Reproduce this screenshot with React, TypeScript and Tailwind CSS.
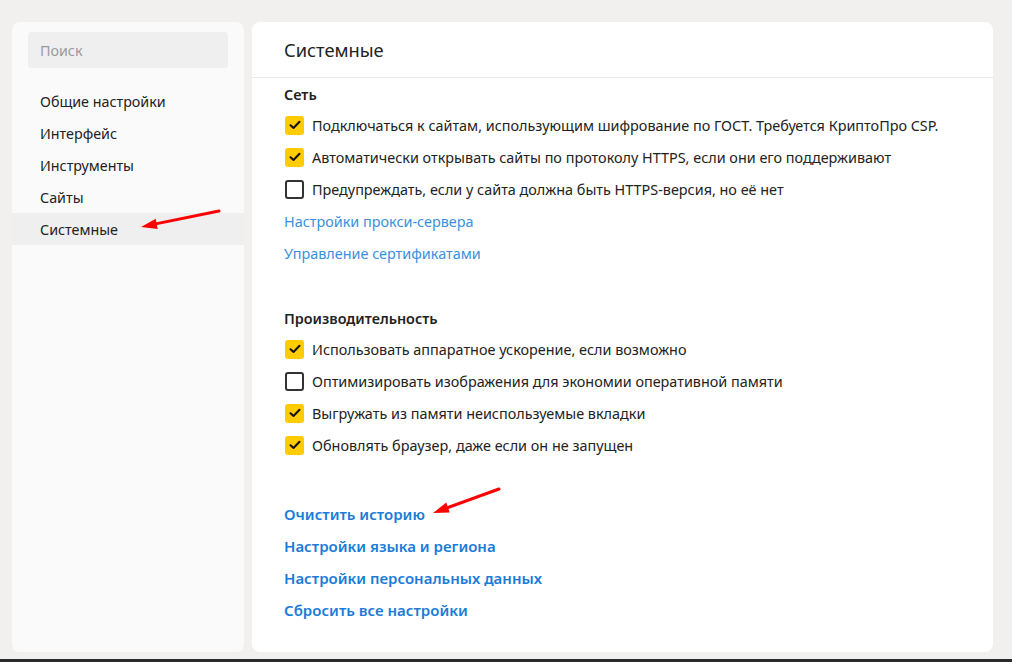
import React from "react";

const NAV_ITEMS = ["Общие настройки", "Интерфейс", "Инструменты", "Сайты", "Системные"];

const NETWORK_OPTIONS = [
  { label: "Подключаться к сайтам, использующим шифрование по ГОСТ. Требуется КриптоПро CSP.", checked: true },
  { label: "Автоматически открывать сайты по протоколу HTTPS, если они его поддерживают", checked: true },
  { label: "Предупреждать, если у сайта должна быть HTTPS-версия, но её нет", checked: false },
];

const PERF_OPTIONS = [
  { label: "Использовать аппаратное ускорение, если возможно", checked: true },
  { label: "Оптимизировать изображения для экономии оперативной памяти", checked: false },
  { label: "Выгружать из памяти неиспользуемые вкладки", checked: true },
  { label: "Обновлять браузер, даже если он не запущен", checked: true },
];

const BOTTOM_LINKS = [
  "Очистить историю",
  "Настройки языка и региона",
  "Настройки персональных данных",
  "Сбросить все настройки",
];

function Checkbox({ checked }: { checked: boolean }) {
  if (checked) {
    return (
      <span className="flex h-[19px] w-[19px] shrink-0 items-center justify-center rounded-[3px] bg-[#ffcc00]">
        <svg width="12" height="10" viewBox="0 0 12 10" fill="none">
          <path d="M1.5 5.2 4.5 8 10.5 1.8" stroke="#111" strokeWidth="2" strokeLinecap="round" strokeLinejoin="round" />
        </svg>
      </span>
    );
  }
  return <span className="h-[19px] w-[19px] shrink-0 rounded-[3px] border-2 border-[#333] bg-white" />;
}

function OptionRow({ label, checked }: { label: string; checked: boolean }) {
  return (
    <div className="flex h-8 items-center gap-2 pl-px">
      <Checkbox checked={checked} />
      <span className="pt-[2px] text-[14.4px] text-[#222]">{label}</span>
    </div>
  );
}

export default function App() {
  return (
    <div
      className="relative flex h-[662px] w-[1012px] flex-col overflow-hidden bg-[#f1f0ee]"
      style={{ fontFamily: '"Noto Sans", "Open Sans", sans-serif' }}
    >
      <div className="flex h-[652px] gap-2 pl-3 pr-[19px] pt-[22px]">
        {/* sidebar */}
        <aside className="flex w-[232px] flex-col rounded-lg bg-[#fafafa] pt-[10px]">
          <div className="mx-4 flex h-9 items-center rounded bg-[#efefef] pl-3 pt-px text-[14.3px] text-[#9a9a9a]">
            Поиск
          </div>
          <nav className="mt-[17px] flex flex-col">
            {NAV_ITEMS.map((item) => (
              <div
                key={item}
                className={`flex h-8 items-center pl-7 pt-[2px] text-[14.3px] text-[#222] ${
                  item === "Системные" ? "bg-[#efefef]" : ""
                }`}
              >
                {item}
              </div>
            ))}
          </nav>
        </aside>

        {/* content */}
        <main className="flex flex-1 flex-col rounded-lg bg-white">
          <div className="flex h-[56px] items-center border-b border-[#e6e6e6] pl-8 pt-px text-[18.3px] text-[#222]">
            Системные
          </div>
          <div className="flex flex-col pl-8">
            <div className="flex h-[31px] items-center pt-[2px] text-[14.4px] font-semibold text-[#222]">Сеть</div>
            {NETWORK_OPTIONS.map((o) => (
              <OptionRow key={o.label} {...o} />
            ))}
            <div className="flex h-8 items-center pt-[2px] text-[14.4px] text-[#3a90e0]">Настройки прокси-сервера</div>
            <div className="flex h-8 items-center pt-[2px] text-[14.4px] text-[#3a90e0]">Управление сертификатами</div>

            <div className="mt-[33px] flex h-[31px] items-center pt-[2px] text-[14.4px] font-semibold text-[#222]">
              Производительность
            </div>
            {PERF_OPTIONS.map((o) => (
              <OptionRow key={o.label} {...o} />
            ))}

            <div className="mt-9 flex flex-col">
              {BOTTOM_LINKS.map((l) => (
                <div key={l} className="flex h-8 items-center pt-[2px] text-[15px] font-semibold text-[#1a7bd8]">
                  {l}
                </div>
              ))}
            </div>
          </div>
        </main>
      </div>
      <div className="flex-1" />
      <div className="h-[3px] bg-[#2b2b2b]" />

      {/* annotation arrows */}
      <svg className="pointer-events-none absolute left-0 top-0" width="1012" height="662">
        <line x1="219" y1="211" x2="152" y2="224.6" stroke="#ff0000" strokeWidth="3" strokeLinecap="round" />
        <polygon points="141,227 157.7,228.9 155.7,218.7" fill="#ff0000" />
        <line x1="499" y1="489" x2="444" y2="509" stroke="#ff0000" strokeWidth="3" strokeLinecap="round" />
        <polygon points="433,513 449.7,512.4 446.3,502.6" fill="#ff0000" />
      </svg>
    </div>
  );
}
